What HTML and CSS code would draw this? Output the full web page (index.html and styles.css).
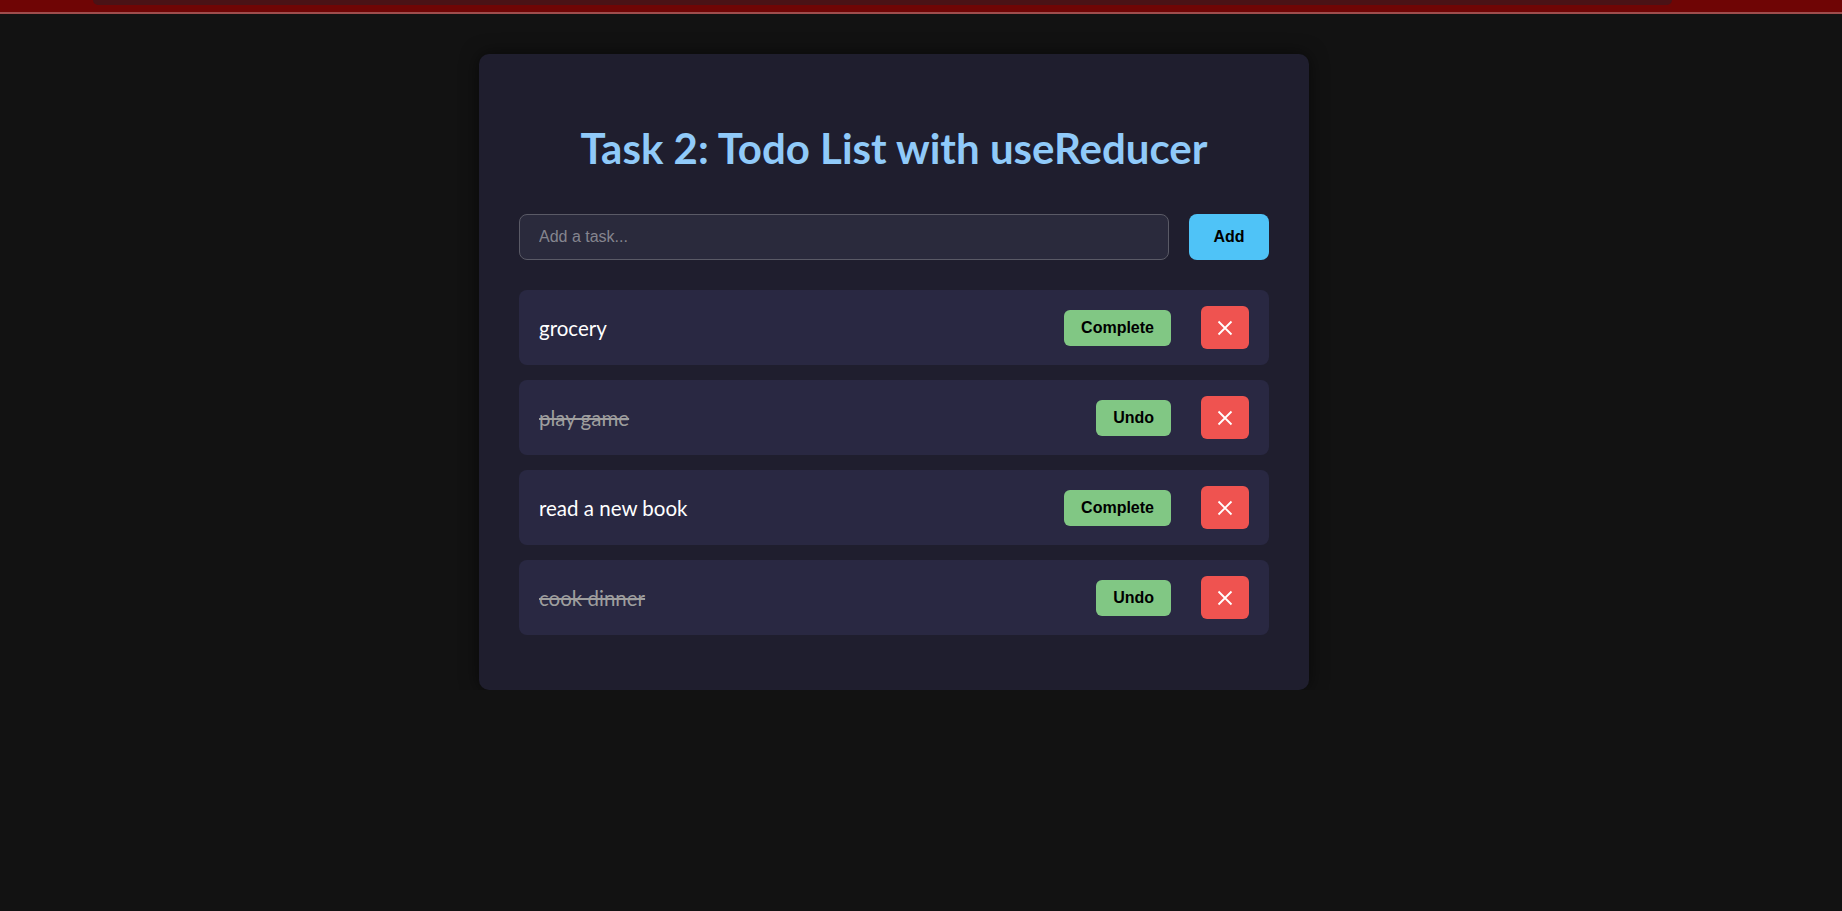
FILE: index.html
```html
<!DOCTYPE html>
<html lang="en">
<head>
<meta charset="utf-8">
<title>Todo List with useReducer</title>
<link rel="stylesheet" href="styles.css">
</head>
<body>
<div class="topbar"><div class="topbar-inner"></div></div>
<main class="page">
  <section class="card">
    <h1 class="title">Task 2: Todo List with useReducer</h1>
    <form class="add-form">
      <input class="add-input" type="text" placeholder="Add a task...">
      <button class="btn btn-add" type="button">Add</button>
    </form>
    <ul class="todo-list">
      <li class="todo">
        <span class="todo-text">grocery</span>
        <button class="btn btn-toggle" type="button">Complete</button>
        <button class="btn btn-delete" type="button" aria-label="Delete"><svg viewBox="0 0 16 16" width="16" height="16"><path d="M1.5 1.5 L14.5 14.5 M14.5 1.5 L1.5 14.5" stroke="#fff" stroke-width="1.8" fill="none"/></svg></button>
      </li>
      <li class="todo done">
        <span class="todo-text">play game</span>
        <button class="btn btn-toggle" type="button">Undo</button>
        <button class="btn btn-delete" type="button" aria-label="Delete"><svg viewBox="0 0 16 16" width="16" height="16"><path d="M1.5 1.5 L14.5 14.5 M14.5 1.5 L1.5 14.5" stroke="#fff" stroke-width="1.8" fill="none"/></svg></button>
      </li>
      <li class="todo">
        <span class="todo-text">read a new book</span>
        <button class="btn btn-toggle" type="button">Complete</button>
        <button class="btn btn-delete" type="button" aria-label="Delete"><svg viewBox="0 0 16 16" width="16" height="16"><path d="M1.5 1.5 L14.5 14.5 M14.5 1.5 L1.5 14.5" stroke="#fff" stroke-width="1.8" fill="none"/></svg></button>
      </li>
      <li class="todo done">
        <span class="todo-text">cook dinner</span>
        <button class="btn btn-toggle" type="button">Undo</button>
        <button class="btn btn-delete" type="button" aria-label="Delete"><svg viewBox="0 0 16 16" width="16" height="16"><path d="M1.5 1.5 L14.5 14.5 M14.5 1.5 L1.5 14.5" stroke="#fff" stroke-width="1.8" fill="none"/></svg></button>
      </li>
    </ul>
  </section>
</main>
</body>
</html>
```
FILE: styles.css
```css
* { box-sizing: border-box; }

html, body {
  margin: 0;
  padding: 0;
  background: #121212;
  font-family: "Segoe UI", Lato, "Noto Sans", sans-serif;
}

.topbar {
  height: 14px;
  background: #6f0505;
  border-bottom: 2px solid #9e4d4d;
  padding: 0 170px 0 93px;
}

.topbar-inner {
  height: 5px;
  background: #4a1216;
  border-radius: 0 0 6px 6px;
}

.page {
  padding: 40px 0 0 479px;
}

.card {
  width: 830px;
  background: #1f1e2e;
  border-radius: 10px;
  padding: 40px 40px 55px;
  box-shadow: 0 0 18px rgba(0, 0, 0, 0.55);
}

.title {
  margin: 26px 0 38px;
  text-align: center;
  color: #90caf9;
  font-size: 42px;
  font-weight: 700;
  line-height: 56px;
}

.add-form {
  display: flex;
  gap: 20px;
  margin: 0;
}

.add-input {
  flex: 1;
  height: 46px;
  background: #2a2a3c;
  border: 1px solid #5a5a66;
  border-radius: 8px;
  padding: 0 19px;
  color: #fff;
  font-family: "Liberation Sans", Arial, sans-serif;
  font-size: 16px;
  outline: none;
}

.add-input::placeholder { color: #85858f; }

.btn {
  border: none;
  font-family: "Liberation Sans", Arial, sans-serif;
  font-weight: 700;
  font-size: 16px;
  color: #000;
  cursor: pointer;
}

.btn-add {
  width: 80px;
  height: 46px;
  background: #4fc3f7;
  border-radius: 8px;
}

.todo-list {
  list-style: none;
  margin: 30px 0 0;
  padding: 0;
  display: flex;
  flex-direction: column;
  gap: 15px;
}

.todo {
  display: flex;
  align-items: center;
  height: 75px;
  padding: 0 20px;
  background: #292842;
  border-radius: 8px;
}

.todo-text {
  flex: 1;
  color: #fff;
  font-size: 20.5px;
}

.done .todo-text {
  color: #9e9e9e;
  text-decoration: line-through;
}

.btn-toggle {
  height: 36px;
  padding: 0 17px;
  background: #81c784;
  border-radius: 6px;
}

.btn-delete {
  margin-left: 30px;
  width: 48px;
  height: 43px;
  background: #ef5350;
  border-radius: 6px;
  display: flex;
  align-items: center;
  justify-content: center;
  padding: 0;
}
```
